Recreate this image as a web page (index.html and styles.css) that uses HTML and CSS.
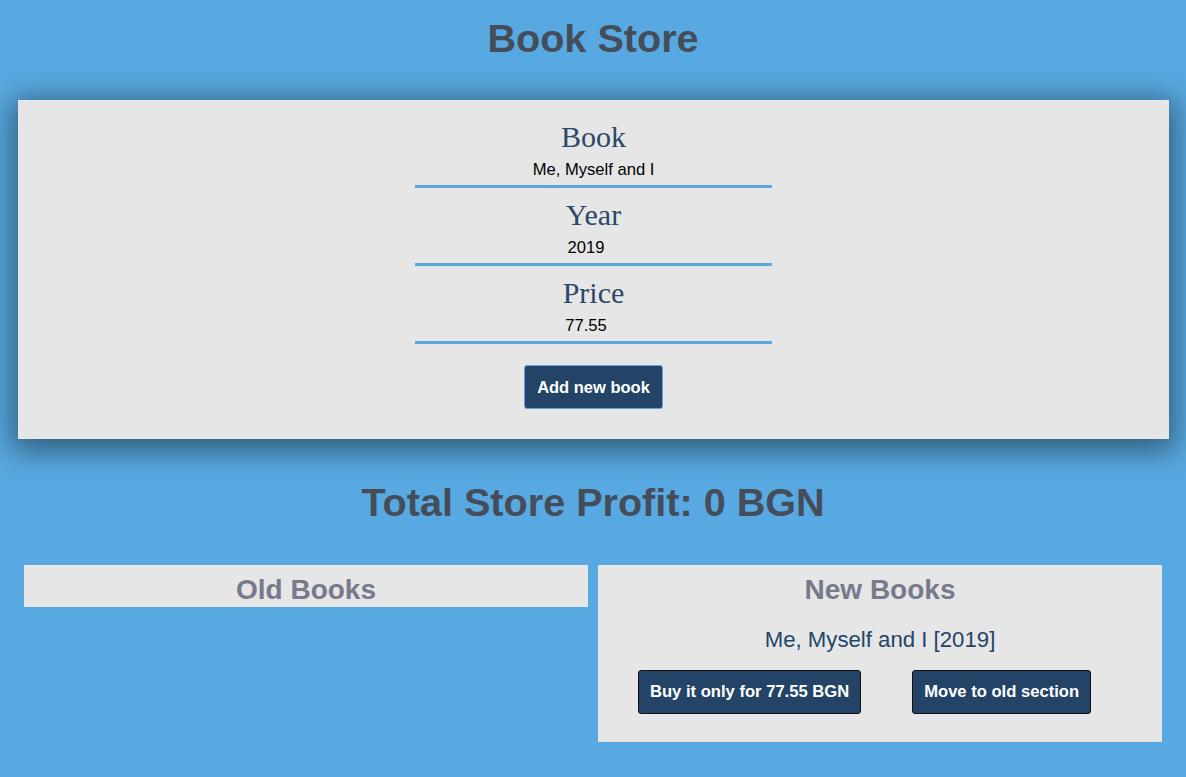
FILE: index.html
```html
<!DOCTYPE html>
<html>
<head>
<meta charset="utf-8">
<title>Book Store</title>
<link rel="stylesheet" href="styles.css">
</head>
<body>
  <h1 class="title">Book Store</h1>
  <form class="book-form">
    <div class="field">
      <label class="field-label">Book</label>
      <input class="field-input" type="text" value="Me, Myself and I">
    </div>
    <div class="field">
      <label class="field-label">Year</label>
      <input class="field-input" type="number" value="2019">
    </div>
    <div class="field">
      <label class="field-label">Price</label>
      <input class="field-input" type="number" value="77.55">
    </div>
    <button class="add-btn" type="button">Add new book</button>
  </form>
  <h1 class="profit">Total Store Profit: 0 BGN</h1>
  <div class="sections">
    <section class="shelf shelf-old">
      <h2 class="shelf-title">Old Books</h2>
    </section>
    <section class="shelf shelf-new">
      <h2 class="shelf-title">New Books</h2>
      <p class="book-name">Me, Myself and I [2019]</p>
      <div class="book-actions">
        <button class="act-btn" type="button">Buy it only for 77.55 BGN</button>
        <button class="act-btn" type="button">Move to old section</button>
      </div>
    </section>
  </div>
</body>
</html>
```
FILE: styles.css
```css
html, body {
  margin: 0;
  padding: 0;
}
body {
  background: #58a9e1;
  font-family: "Liberation Sans", Arial, sans-serif;
  min-height: 777px;
}
.title {
  margin: 15px 0 0;
  font-size: 39.6px;
  line-height: 46px;
  font-weight: bold;
  text-align: center;
  color: #444d59;
}
.book-form {
  margin: 39px 17px 0 18px;
  padding: 20px 0 30px;
  background: #e6e6e6;
  box-shadow: 0 6px 28px 6px rgba(0, 0, 0, 0.45);
  display: flex;
  flex-direction: column;
  align-items: center;
}
.field {
  display: flex;
  flex-direction: column;
  align-items: center;
  margin-bottom: 10px;
}
.field-label {
  font-family: "Liberation Serif", "Times New Roman", serif;
  font-size: 30px;
  line-height: 34px;
  color: #2b4769;
}
.field-input {
  width: 357px;
  box-sizing: border-box;
  margin: 0;
  padding: 7px 0 6px;
  border: none;
  border-bottom: 3px solid #5ba8dd;
  background: transparent;
  font-family: "Liberation Sans", Arial, sans-serif;
  font-size: 16.6px;
  line-height: 18px;
  color: #000;
  text-align: center;
  outline: none;
}
.add-btn {
  margin-top: 11px;
  padding: 12px 12px;
  background: #234466;
  color: #fff;
  border: 1px solid #6c9ce4;
  border-radius: 3px;
  font-family: "Liberation Sans", Arial, sans-serif;
  font-size: 16.5px;
  line-height: 18px;
  font-weight: bold;
}
.profit {
  margin: 40px 0 0;
  font-size: 39.6px;
  line-height: 46px;
  font-weight: bold;
  text-align: center;
  color: #444d59;
}
.sections {
  display: flex;
  align-items: flex-start;
  gap: 10px;
  margin: 40px 24px 0 24px;
}
.shelf {
  flex: 1;
  background: #e6e6e6;
  padding: 9px 0 1px;
}
.shelf-new {
  padding-bottom: 28px;
}
.shelf-title {
  margin: 0;
  font-size: 28px;
  line-height: 32px;
  font-weight: bold;
  text-align: center;
  color: #777a8c;
}
.book-name {
  margin: 21px 0 0;
  font-size: 22.2px;
  line-height: 25px;
  text-align: center;
  color: #234466;
}
.book-actions {
  display: flex;
  gap: 51px;
  padding-left: 40px;
  margin-top: 18px;
}
.act-btn {
  padding: 12px 11px;
  background: #234466;
  color: #fff;
  border: 1px solid #111;
  border-radius: 3px;
  font-family: "Liberation Sans", Arial, sans-serif;
  font-size: 16.6px;
  line-height: 18px;
  font-weight: bold;
}
```
